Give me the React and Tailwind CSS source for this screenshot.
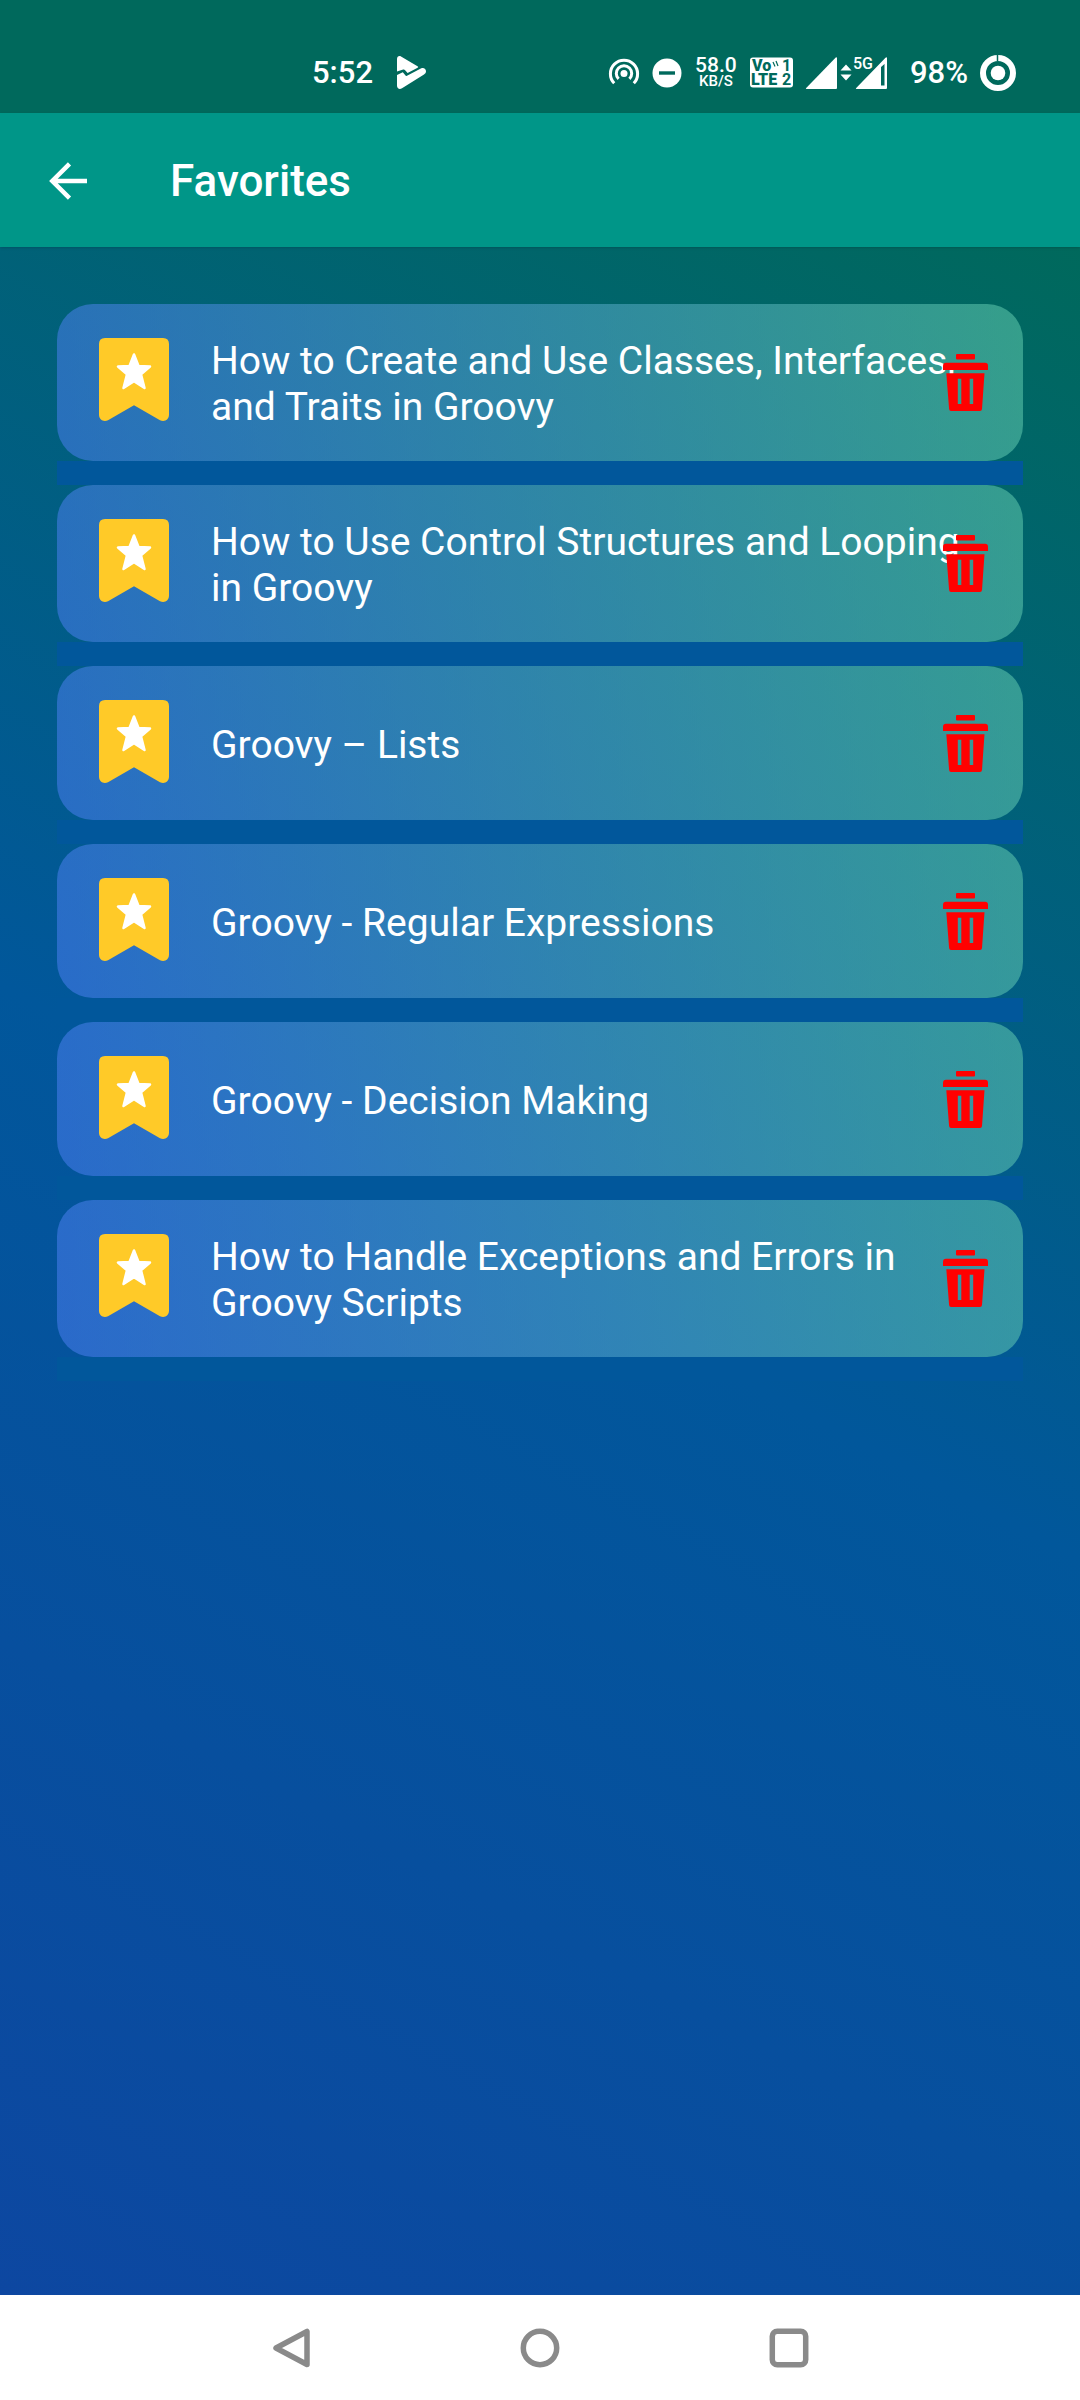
import { useState } from 'react';

const initialFavorites = [
  { id: 1, title: 'How to Create and Use Classes, Interfaces, and Traits in Groovy' },
  { id: 2, title: 'How to Use Control Structures and Looping in Groovy' },
  { id: 3, title: 'Groovy – Lists' },
  { id: 4, title: 'Groovy - Regular Expressions' },
  { id: 5, title: 'Groovy - Decision Making' },
  { id: 6, title: 'How to Handle Exceptions and Errors in Groovy Scripts' }
];

function StatusBar() {
  return (
    <div className="flex h-[113px] items-center bg-[#00695c] pt-8 pr-16 pl-[312px] font-medium text-white">
      <span className="text-[31px] leading-9">5:52</span>
      <svg className="ml-6 h-[33px] w-[29px]" viewBox="0 0 29 33" fill="currentColor">
        <path d="M0 15.6V3C0 .6 2 -.6 4 .5L20.5 10.2C21.6 10.9 21.3 11.3 20.6 11.7L10.6 16.9L7.9 13.9Q7.2 13.2 6.2 13.6Z" />
        <path d="M0 18.9L5.8 16.3L8.3 19.3Q9 20.2 10 19.7L24.3 12.3C26.8 11.2 29 13.2 29 15.3C29 16.8 28.2 17.8 27 18.5L5 32.3C2.5 33.7 0 32.5 0 29.8Z" />
      </svg>

      <div className="ml-auto flex items-center">
        <svg className="h-[30px] w-8" viewBox="0 0 32 30" fill="none" stroke="currentColor" strokeWidth="3">
          <circle cx="16" cy="15.5" r="3.5" fill="currentColor" stroke="none" />
          <path d="M10.6 20.9A7.7 7.7 0 1 1 21.4 20.9" />
          <path d="M6.2 25.3A13.6 13.6 0 1 1 25.8 25.3" />
        </svg>
        <svg className="ml-3 h-[30px] w-[30px]" viewBox="0 0 30 30">
          <circle cx="15" cy="15" r="14.5" fill="currentColor" />
          <rect x="7" y="13.3" width="16" height="3.4" fill="#00695c" />
        </svg>
        <div className="ml-3 flex w-[44px] flex-col items-center">
          <span className="text-[21px] leading-4">58.0</span>
          <span className="text-[15px] leading-4">KB/S</span>
        </div>
        <svg className="ml-3 h-[31px] w-[43px]" viewBox="0 0 43 31">
          <rect width="43" height="30" y=".5" rx="3" fill="currentColor" />
          <g fill="#00695c" className="font-[Roboto] font-black">
            <text x="2" y="14" fontSize="16">Vo</text>
            <text x="1" y="28" fontSize="16">LTE</text>
            <text x="32" y="14" fontSize="16" className="font-bold">1</text>
            <text x="32" y="28" fontSize="16" className="font-bold">2</text>
          </g>
          <path d="M23 5l2 4.500M26 4l2 5" stroke="#00695c" strokeWidth="1.2" />
        </svg>
        <svg className="ml-3 h-[34px] w-[83px] overflow-visible" viewBox="0 0 83 34" fill="currentColor">
          <path d="M32 2.5V32Q32 33 31 33H1.5Q.3 33 1.2 32L30.5 1.8Q32 .6 32 2.5Z" />
          <path d="M35.5 14.5L41 8.5L46.5 14.5ZM35.5 18.5H46.5L41 24.5Z" />
          <path
            fillRule="evenodd"
            d="M82 2.5V32Q82 33 81 33H51.5Q50.3 33 51.2 32L80.5 1.8Q82 .6 82 2.5ZM76 11V29.5H79.5V8Z"
          />
          <text x="48" y="13" fontSize="16" className="font-[Roboto] font-medium" stroke="#00695c" strokeWidth="2" paintOrder="stroke">5G</text>
        </svg>
        <span className="ml-[22px] text-[31px] leading-9">98%</span>
        <svg className="ml-3 h-9 w-9" viewBox="0 0 36 36">
          <circle cx="18" cy="18" r="15" fill="none" stroke="currentColor" strokeWidth="6" />
          <circle cx="18" cy="18" r="7.3" fill="currentColor" />
          <path d="M17.5 0V6" stroke="#00695c" strokeWidth="1.5" />
        </svg>
      </div>
    </div>
  );
}

function BookmarkIcon() {
  return (
    <svg className="h-[83px] w-[70px] shrink-0" viewBox="0 0 70 83">
      <path
        d="M6 0H64Q70 0 70 6V76.5C70 81.5 65.5 84.5 61 82.2L35 67.2L9 82.2C4.5 84.5 0 81.5 0 76.5V6Q0 0 6 0Z"
        fill="#ffca28"
      />
      <path
        d="M35 16.500L39.5 28L51 28.500L42 36.2L45.5 50L35 43.2L24.5 50L28 36.2L19 28.500L30.5 28Z"
        fill="white"
        stroke="white"
        strokeWidth="2.5"
        strokeLinejoin="round"
      />
    </svg>
  );
}

function TrashIcon() {
  return (
    <svg className="h-[57px] w-[45px]" viewBox="0 0 45 57" fill="#ff0000">
      <rect x="13" width="19" height="5.5" rx="1" />
      <path d="M3 8.7H42Q45 8.7 45 11.7V16H0V11.7Q0 8.7 3 8.7Z" />
      <path
        fillRule="evenodd"
        d="M3.3 19.2H41.5L39 55Q38.8 57 37 57H8Q6.3 57 6.1 55ZM14.8 24.7V50H18.3V24.7ZM26.7 24.7V50H30.2V24.7Z"
      />
    </svg>
  );
}

export default function App() {
  const [favorites, setFavorites] = useState(initialFavorites);

  const handleRemove = (id) => {
    setFavorites(favorites.filter((item) => item.id !== id));
  };

  return (
    <div className="flex min-h-screen flex-col font-[Roboto,sans-serif]">
      <StatusBar />

      <header className="z-10 flex h-[134px] items-center bg-[#009688] pt-0.5 pl-11 text-white shadow">
        <button aria-label="Back" className="flex h-12 w-12 items-center justify-center">
          <svg className="h-[38px] w-[38px]" viewBox="0 0 38 38" fill="none" stroke="currentColor" strokeWidth="4.5">
            <path d="M38 19H4M20.5 1.8L3.3 19L20.5 36.2" />
          </svg>
        </button>
        <h1 className="ml-[78px] text-[44px] font-medium">Favorites</h1>
      </header>

      <main className="flex-1 bg-[linear-gradient(28deg,#0d47a1,#01579b,#00695c)] px-[57px] pt-[57px]">
        <ul>
          {favorites.map((item) => (
            <li key={item.id}>
              <div className="relative flex min-h-[154px] rounded-[36px] bg-[linear-gradient(81deg,#5080f880,#6ad5b480)] pr-14 pl-[42px]">
                <div className="pt-[34px]">
                  <BookmarkIcon />
                </div>
                <p className="ml-[42px] flex-1 self-center pt-[34px] pb-[31px] text-[39px] leading-[46px] text-white">
                  {item.title}
                </p>
                <button
                  aria-label={`Remove ${item.title}`}
                  onClick={() => handleRemove(item.id)}
                  className="absolute inset-y-0 right-[35px] flex items-center"
                >
                  <TrashIcon />
                </button>
              </div>
              <div className="h-6 bg-[#01579b]" />
            </li>
          ))}
        </ul>
      </main>

      <nav className="flex h-[105px] items-center justify-center gap-[209px] bg-white text-[#8a8a8a]">
        <button aria-label="Back">
          <svg className="h-10 w-10" viewBox="0 0 40 40" fill="none" stroke="currentColor" strokeWidth="5.5" strokeLinejoin="round">
            <path d="M36 3.5V36.5L5 20Z" />
          </svg>
        </button>
        <button aria-label="Home">
          <svg className="h-10 w-10" viewBox="0 0 40 40" fill="none" stroke="currentColor" strokeWidth="5.5">
            <circle cx="20" cy="20" r="16.7" />
          </svg>
        </button>
        <button aria-label="Recent apps">
          <svg className="h-10 w-10" viewBox="0 0 40 40" fill="none" stroke="currentColor" strokeWidth="5.5">
            <rect x="3.3" y="3.3" width="33.4" height="33.4" rx="5" />
          </svg>
        </button>
      </nav>
    </div>
  );
}
